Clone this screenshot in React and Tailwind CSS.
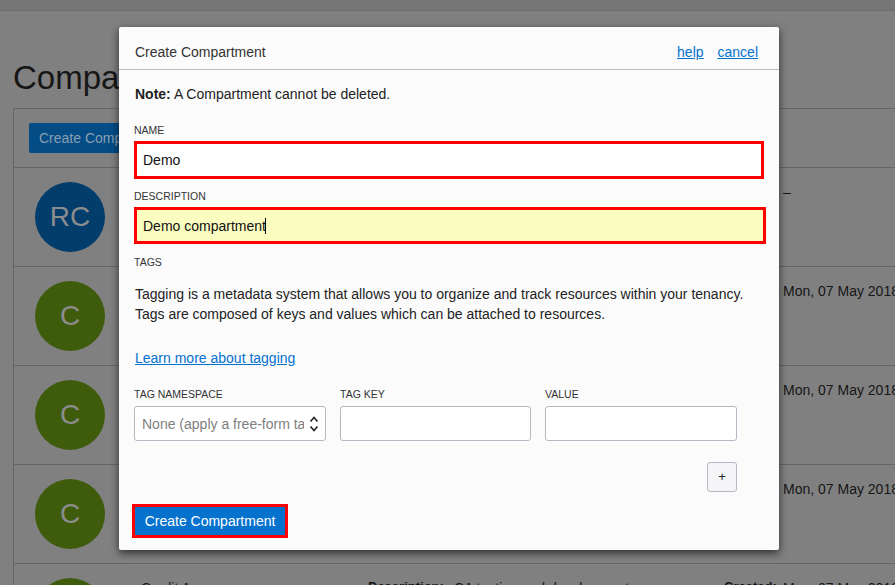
const rows = [
  { initials: "RC", color: "bg-[#023d6c]", name: "rootCompartment", description: "The root compartment", created: "–" },
  { initials: "C", color: "bg-[#3e5c0c]", name: "Compute", description: "Compute resources", created: "Mon, 07 May 2018" },
  { initials: "C", color: "bg-[#3e5c0c]", name: "Containers", description: "Container resources", created: "Mon, 07 May 2018" },
  { initials: "C", color: "bg-[#3e5c0c]", name: "Core", description: "Core resources", created: "Mon, 07 May 2018" },
  { initials: "C", color: "bg-[#3e5c0c]", name: "Credit A", description: "CA testing and development", created: "Mon, 07 May 2018" },
];

const Row = ({ initials, color, name, description, created }) => {
  return (
    <div className="flex h-[99px] shrink-0 border-t border-[#666666] pl-[21px] pt-[14px]">
      <div className={`${color} flex h-[70px] w-[70px] shrink-0 items-center justify-center rounded-full text-[28px] text-[#8c8c8c]`}>
        {initials}
      </div>
      <div className="ml-[36px] w-[227px] shrink-0 text-sm whitespace-nowrap">{name}</div>
      <div className="flex w-[356px] shrink-0 text-sm whitespace-nowrap">
        <b className="w-[86px] text-[13px]">Description:</b>
        <span>{description}</span>
      </div>
      <div className="flex text-sm whitespace-nowrap">
        <b className="w-[59px] text-[13px]">Created:</b>
        <span>{created}</span>
      </div>
    </div>
  );
};

const Label = ({ children, className = "" }) => {
  return <div className={`h-[14px] text-[10.5px] leading-[14px] text-[#333333] ${className}`}>{children}</div>;
};

const App = () => {
  return (
    <div className="relative h-[585px] w-[895px] overflow-hidden bg-[#808080] font-['Liberation_Sans',Arial,sans-serif] text-[#161616]">
      <div className="h-[11px] border-b border-[#6c6c6c] bg-[#767676]" />
      <h1 className="ml-[13px] mt-[47px] h-[50px] text-[33px] leading-[40px]">Compartments</h1>
      <div className="ml-[13px] rounded-tl-[2px] border-l border-t border-[#666666]">
        <div className="h-[58px] pl-[15px] pt-[14px]">
          <div className="flex h-[30px] w-[150px] items-center rounded-[2px] bg-[#034c85] pl-[10px] text-sm text-[#8c9fb0]">
            Create Compartment
          </div>
        </div>
        {rows.map((row) => (
          <Row key={row.name} {...row} />
        ))}
      </div>

      <div className="absolute left-[119px] top-[27px] h-[523px] w-[660px] rounded-[2px] bg-[#fbfbfc] text-sm text-[#222222] shadow-[0_3px_8px_rgba(0,0,0,0.65)]">
        <div className="flex h-[43px] items-center justify-between border-b border-[#b8bcc5] pl-[16px] pr-[21px] pt-[8px] text-[#333333]">
          <span>Create Compartment</span>
          <div className="flex gap-[14px] text-[#0572ce] underline">
            <a href="#help">help</a>
            <a href="#cancel">cancel</a>
          </div>
        </div>
        <div className="px-[15px] pt-[14px]">
          <p className="ml-px h-[20px] leading-[20px]">
            <b>Note:</b> A Compartment cannot be deleted.
          </p>
          <Label className="mt-[19px]">NAME</Label>
          <div className="mt-[4px] flex h-[38px] w-[630px] items-center border-[3px] border-[#ff0000] bg-white pl-[6px] text-[#111111]">
            Demo
          </div>
          <Label className="mt-[10px]">DESCRIPTION</Label>
          <div className="mt-[4px] flex h-[37px] w-[632px] items-center border-[3px] border-[#ff0000] bg-[#fbfdc0] pl-[6px] text-[#111111]">
            Demo compartment
            <span className="-ml-px h-[16px] w-px bg-black" />
          </div>
          <Label className="mt-[11px]">TAGS</Label>
          <p className="ml-px mt-[15px] leading-[20px]">
            Tagging is a metadata system that allows you to organize and track resources within your tenancy.
            <br />
            Tags are composed of keys and values which can be attached to resources.
          </p>
          <a href="#tagging" className="ml-px mt-[24px] block h-[20px] leading-[20px] text-[#0572ce] underline">
            Learn more about tagging
          </a>
          <div className="mt-[19px] w-[603px]">
            <div className="flex gap-[14px]">
              <div className="w-[192px]">
                <Label>TAG NAMESPACE</Label>
                <div className="mt-[5px] flex h-[35px] items-center rounded-[3px] border border-[#b4b8c2] bg-white pl-[7px] text-[#808080]">
                  <span className="w-[162px] overflow-hidden whitespace-nowrap">None (apply a free-form tag)</span>
                  <svg width="10" height="16" viewBox="0 0 10 16" fill="none" stroke="#222222" strokeWidth="1.6" className="ml-[5px] shrink-0">
                    <path d="M1.5 5.5 L5 1.5 L8.5 5.5" />
                    <path d="M1.5 10.5 L5 14.5 L8.5 10.5" />
                  </svg>
                </div>
              </div>
              <div className="w-[191px]">
                <Label>TAG KEY</Label>
                <div className="mt-[5px] h-[35px] rounded-[3px] border border-[#b4b8c2] bg-white" />
              </div>
              <div className="w-[192px]">
                <Label>VALUE</Label>
                <div className="mt-[5px] h-[35px] rounded-[3px] border border-[#b4b8c2] bg-white" />
              </div>
            </div>
            <div className="mt-[21px] flex justify-end">
              <button className="flex h-[30px] w-[30px] items-center justify-center rounded-[3px] border border-[#b4b8c2] bg-[#f5f5f7] text-[13px] text-[#222222]">
                +
              </button>
            </div>
          </div>
          <button className="-ml-[2px] mt-[12px] flex h-[34px] w-[156px] items-center justify-center border-[3px] border-[#ff0000] bg-[#0572ce] text-white">
            Create Compartment
          </button>
        </div>
      </div>
    </div>
  );
};

export default App;
